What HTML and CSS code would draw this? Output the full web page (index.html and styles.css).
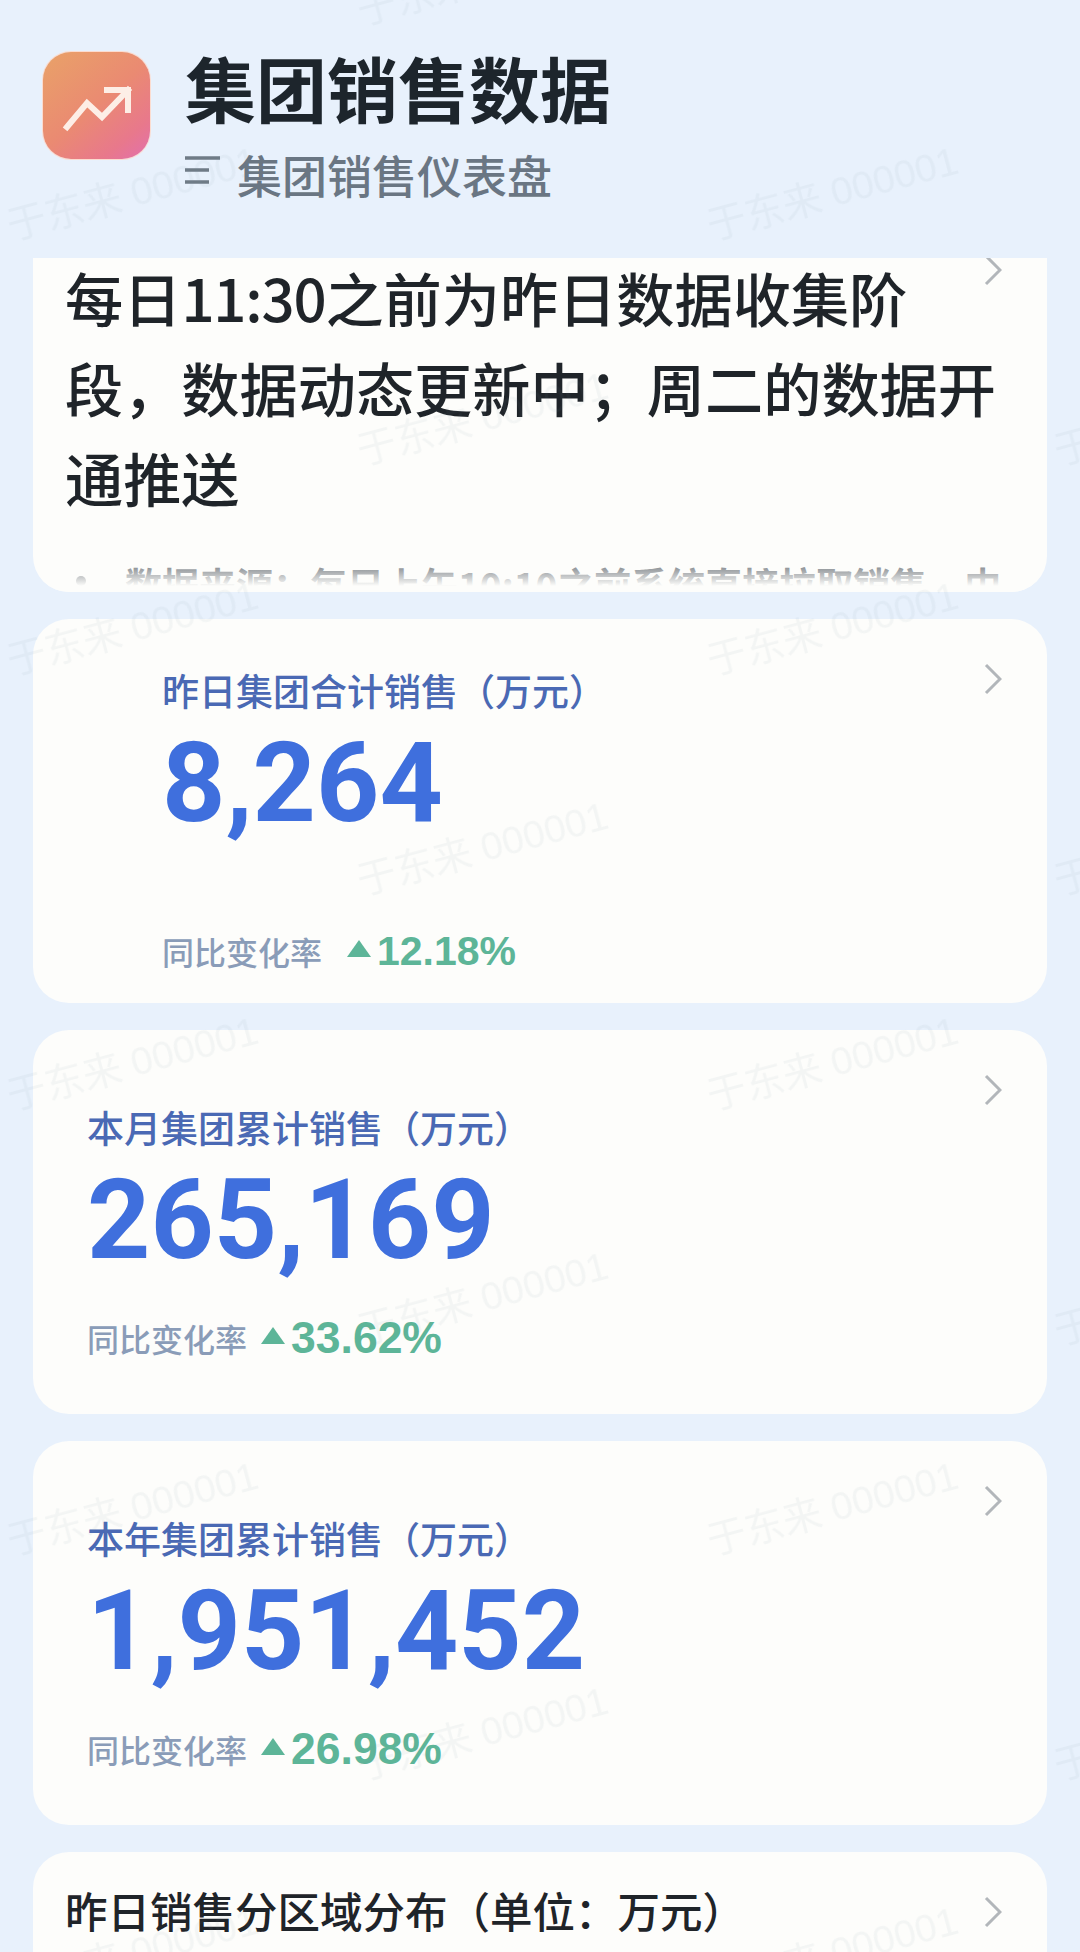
FILE: index.html
```html
<!DOCTYPE html>
<html lang="zh-CN">
<head>
<meta charset="utf-8">
<title>集团销售数据</title>
<link rel="stylesheet" href="styles.css">
</head>
<body>
<div class="page">
  <header class="header">
    <div class="logo">
      <svg viewBox="0 0 107 107" width="107" height="107"><path class="logo-line" d="M24 75 L44 51 L59 65 L85 38 M64 38 H85 V58"/></svg>
    </div>
    <div class="titles">
      <h1 class="title">集团销售数据</h1>
      <div class="subtitle">
        <svg class="menu" viewBox="0 0 36 28" width="36" height="28"><path d="M0 2H35M0 14H24M0 26H24"/></svg>
        <span>集团销售仪表盘</span>
      </div>
    </div>
  </header>

  <main class="cards">
    <section class="card notice">
      <svg class="chevron chevron-top" viewBox="0 0 18 32" width="18" height="32"><path d="M2 2 L16 16 L2 30"/></svg>
      <p class="notice-text">每日<span class="time">11:30</span>之前为昨日数据收集阶段，数据动态更新中；周二的数据开通推送</p>
      <ul class="notice-list"><li>数据来源：每日上午10:10之前系统直接拉取销售，中</li></ul>
    </section>

    <section class="card metric metric-wide">
      <svg class="chevron" viewBox="0 0 18 32" width="18" height="32"><path d="M2 2 L16 16 L2 30"/></svg>
      <div class="label">昨日集团合计销售（万元）</div>
      <div class="value">8,264</div>
      <div class="change"><span class="change-label">同比变化率</span><span class="tri"></span><span class="pct">12.18%</span></div>
    </section>

    <section class="card metric">
      <svg class="chevron" viewBox="0 0 18 32" width="18" height="32"><path d="M2 2 L16 16 L2 30"/></svg>
      <div class="label">本月集团累计销售（万元）</div>
      <div class="value">265,169</div>
      <div class="change"><span class="change-label">同比变化率</span><span class="tri"></span><span class="pct">33.62%</span></div>
    </section>

    <section class="card metric">
      <svg class="chevron" viewBox="0 0 18 32" width="18" height="32"><path d="M2 2 L16 16 L2 30"/></svg>
      <div class="label">本年集团累计销售（万元）</div>
      <div class="value">1,951,452</div>
      <div class="change"><span class="change-label">同比变化率</span><span class="tri"></span><span class="pct">26.98%</span></div>
    </section>

    <section class="card region">
      <svg class="chevron" viewBox="0 0 18 32" width="18" height="32"><path d="M2 2 L16 16 L2 30"/></svg>
      <div class="region-title">昨日销售分区域分布（单位：万元）</div>
    </section>
  </main>

  <div class="watermarks" aria-hidden="true">
    <span class="wm c3 r0">于东来 000001</span>
    <span class="wm c1 r1">于东来 000001</span><span class="wm c2 r1">于东来 000001</span>
    <span class="wm c3 r2">于东来 000001</span><span class="wm c4 r2">于东来 000001</span>
    <span class="wm c1 r3">于东来 000001</span><span class="wm c2 r3">于东来 000001</span>
    <span class="wm c3 r4">于东来 000001</span><span class="wm c4 r4">于东来 000001</span>
    <span class="wm c1 r5">于东来 000001</span><span class="wm c2 r5">于东来 000001</span>
    <span class="wm c3 r6">于东来 000001</span><span class="wm c4 r6">于东来 000001</span>
    <span class="wm c1 r7">于东来 000001</span><span class="wm c2 r7">于东来 000001</span>
    <span class="wm c3 r8">于东来 000001</span><span class="wm c4 r8">于东来 000001</span>
    <span class="wm c1 r9">于东来 000001</span><span class="wm c2 r9">于东来 000001</span>
  </div>
</div>
</body>
</html>
```

FILE: styles.css
```css
* { box-sizing: border-box; }
html, body { margin: 0; padding: 0; }
body {
  width: 1080px;
  height: 1952px;
  overflow: hidden;
  background: #e8f1fc;
  font-family: "Noto Sans CJK SC", "Liberation Sans", sans-serif;
}
.page { position: relative; width: 1080px; height: 1952px; overflow: hidden; }

.header { display: flex; gap: 35px; padding: 52px 0 0 43px; height: 258px; }
.logo {
  width: 107px; height: 107px; border-radius: 28px; flex: none;
  background: linear-gradient(140deg, #e9a268 0%, #ea8a72 50%, #e8788c 80%, #e270ae 100%);
  box-shadow: 0 0 0 1px #fbdcd0;
}
.logo svg { display: block; }
.logo-line { fill: none; stroke: #fdeee6; stroke-width: 6; stroke-linecap: square; }
.titles { display: flex; flex-direction: column; }
.title { margin: -14px 0 0; font-size: 71px; line-height: 96px; font-weight: 700; color: #1d252c; }
.subtitle { display: flex; align-items: center; gap: 16px; margin-top: 11px; font-size: 45px; line-height: 60px; font-weight: 500; color: #6a7683; }
.menu { margin-top: -10px; }
.menu path { fill: none; stroke: #6f7b86; stroke-width: 3.5; }

.cards { display: flex; flex-direction: column; gap: 27px; padding: 0 33px; }
.card { position: relative; background: #fdfdfb; border-radius: 36px; overflow: hidden; }
.chevron { position: absolute; top: 44px; right: 45px; }
.chevron path { fill: none; stroke: #b2b6ba; stroke-width: 3; }
.chevron-top { top: -4px; }

.notice { height: 334px; padding: 0 32px; border-radius: 0 0 36px 36px; }
.notice::after {
  content: ""; position: absolute; left: 0; right: 0; bottom: 0; height: 30px;
  background: linear-gradient(to bottom, rgba(253,253,251,0), #fdfdfb 80%);
}
.notice-text { margin: -6px 0 0; font-size: 58.2px; line-height: 90px; font-weight: 500; color: #1f2429; padding-right: 16px; }
.time { letter-spacing: -1.2px; }
.notice-list { margin: 36px 0 0; padding: 0 0 0 60px; list-style: none; font-size: 37px; line-height: 52px; font-weight: 700; color: #6f757b; white-space: nowrap; }
.notice-list li { position: relative; }
.notice-list li::before { content: ""; position: absolute; left: -49px; top: 18px; width: 10px; height: 10px; border-radius: 50%; background: #6f757b; }

.metric { height: 384px; padding: 71px 0 0 54px; }
.metric-wide { padding: 45px 0 0 129px; }
.label { font-size: 37px; line-height: 52px; font-weight: 500; color: #4a69b4; }
.value { margin-top: 7px; font-family: Roboto, "Liberation Sans", sans-serif; font-size: 110.5px; line-height: 120px; font-weight: 700; color: #3f6fdd; }
.change { display: flex; align-items: center; margin-top: 33px; height: 50px; }
.metric-wide .change { margin-top: 83px; }
.change-label { font-size: 32px; font-weight: 500; color: #8a9cb8; }
.tri { width: 0; height: 0; margin: -6px 6px 0 14px; border-left: 12px solid transparent; border-right: 12px solid transparent; border-bottom: 17px solid #5db598; }
.metric-wide .tri { margin-left: 25px; }
.pct { font-family: "Liberation Sans", sans-serif; font-size: 44.5px; font-weight: 700; color: #5db598; }
.metric-wide .pct { font-size: 41px; }

.region { height: 200px; padding: 30px 0 0 32px; }
.region-title { font-size: 42.5px; line-height: 56px; font-weight: 500; color: #1f2429; }

.watermarks { position: absolute; inset: 0; pointer-events: none; }
.wm {
  position: absolute; white-space: nowrap;
  font-family: "Liberation Sans", "Noto Sans CJK SC", sans-serif;
  font-size: 39px; line-height: 44px; color: rgba(120,135,155,0.07);
  transform: rotate(-15deg); transform-origin: left center;
  filter: blur(0.6px);
}
.c1 { left: 8px; }
.c2 { left: 708px; }
.c3 { left: 358px; }
.c4 { left: 1055px; }
.r0 { top: -10px; }
.r1 { top: 205px; }
.r2 { top: 430px; }
.r3 { top: 640px; }
.r4 { top: 860px; }
.r5 { top: 1075px; }
.r6 { top: 1310px; }
.r7 { top: 1520px; }
.r8 { top: 1745px; }
.r9 { top: 1965px; }
```
